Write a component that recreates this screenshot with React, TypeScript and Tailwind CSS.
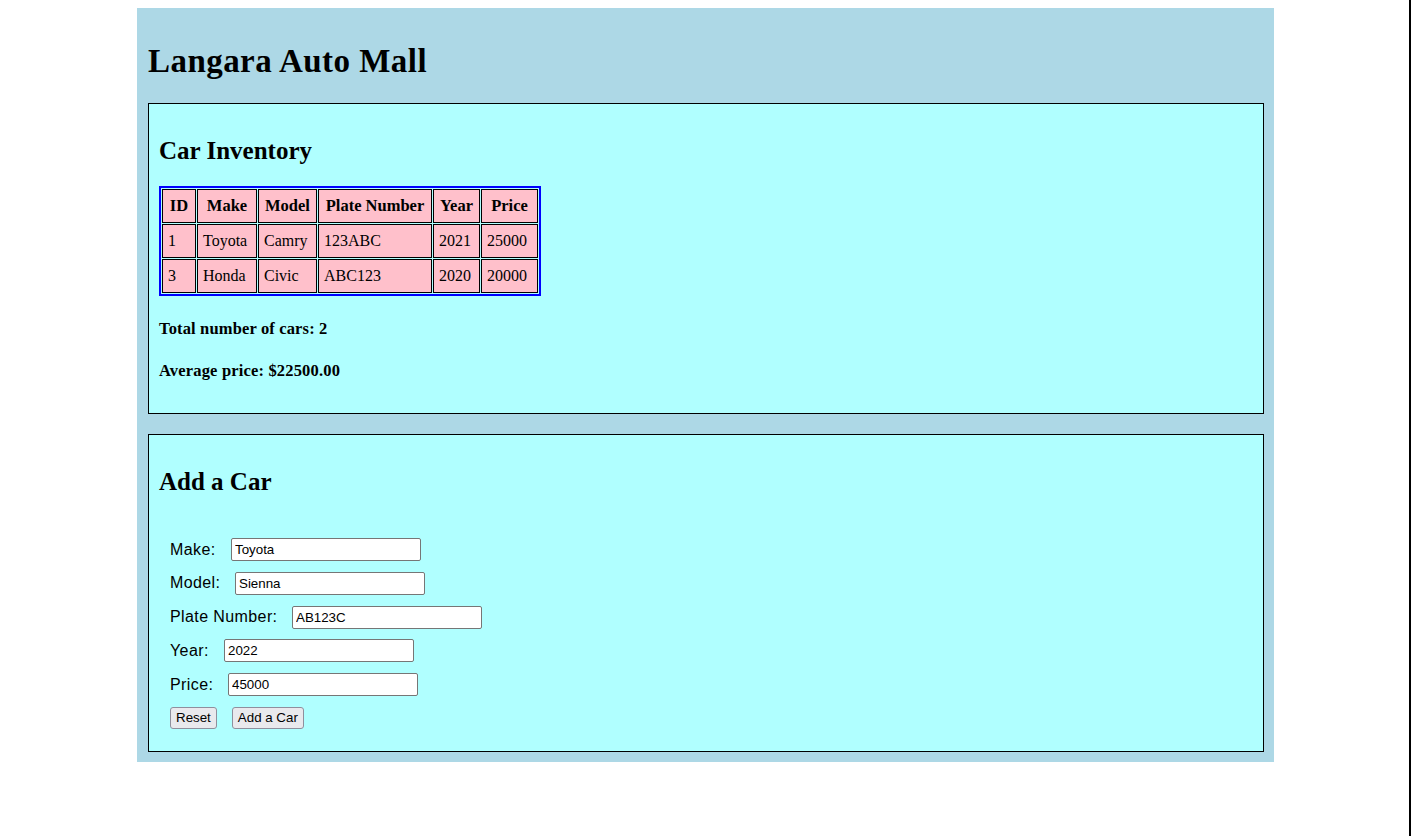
import { useState } from 'react';

interface Car {
  id: number;
  make: string;
  model: string;
  plate: string;
  year: number;
  price: number;
}

const initialCars: Car[] = [
  { id: 1, make: 'Toyota', model: 'Camry', plate: '123ABC', year: 2021, price: 25000 },
  { id: 3, make: 'Honda', model: 'Civic', plate: 'ABC123', year: 2020, price: 20000 },
];

const serif = "font-['Liberation_Serif','Times_New_Roman',serif]";
const sans = "font-['Liberation_Sans',Arial,sans-serif]";

const cell = 'border border-black bg-[#ffc0cb] px-[5px] py-0 h-[34px] leading-[18px]';
const btn = 'h-[22px] px-[5px] border border-[#8f8f9d] rounded-[3px] bg-[#e9e9ed] text-[13.33px] leading-[16px] text-black';

export default function App() {
  const [cars] = useState<Car[]>(initialCars);
  const [form, setForm] = useState({
    make: 'Toyota',
    model: 'Sienna',
    plate: 'AB123C',
    year: '2022',
    price: '45000',
  });

  const total = cars.length;
  const average = total ? cars.reduce((sum, c) => sum + c.price, 0) / total : 0;

  // label widths include the space before the input
  const fields: { key: keyof typeof form; label: string; width: string }[] = [
    { key: 'make', label: 'Make:', width: 'w-[61px]' },
    { key: 'model', label: 'Model:', width: 'w-[65px]' },
    { key: 'plate', label: 'Plate Number:', width: 'w-[122px]' },
    { key: 'year', label: 'Year:', width: 'w-[54px]' },
    { key: 'price', label: 'Price:', width: 'w-[58px]' },
  ];

  return (
    <div className="w-full bg-white">
      <div className="w-[1411px] h-[836px] border-r-2 border-black pt-[8px]">
        <div className={`ml-[137px] w-[1137px] bg-[#add8e6] pl-[11px] pr-[10px] pt-[10px] pb-[10px] text-black ${serif}`}>
          <h1 className="mt-[23.8px] mb-[23.2px] text-[33px] leading-[38px] font-bold tracking-[0.45px]">
            Langara Auto Mall
          </h1>

          {/* Inventory */}
          <section className="border border-black bg-[#b0ffff] p-[10px]">
            <h2 className="mt-[22px] mb-[21px] text-[25px] leading-[29px] font-bold">Car Inventory</h2>
            <table className="table-fixed w-[382px] border-separate border-spacing-[1px] border-2 border-[#0000ff] text-[16px]">
              <thead>
                <tr className="text-[16.5px] font-bold">
                  <th className={`${cell} w-[34px] text-center`}>ID</th>
                  <th className={`${cell} w-[60px] text-center`}>Make</th>
                  <th className={`${cell} w-[59px] text-center`}>Model</th>
                  <th className={`${cell} w-[114px] text-center`}>Plate Number</th>
                  <th className={`${cell} w-[47px] text-center`}>Year</th>
                  <th className={`${cell} w-[57px] text-center`}>Price</th>
                </tr>
              </thead>
              <tbody>
                {cars.map(car => (
                  <tr key={car.id}>
                    <td className={cell}>{car.id}</td>
                    <td className={cell}>{car.make}</td>
                    <td className={cell}>{car.model}</td>
                    <td className={cell}>{car.plate}</td>
                    <td className={cell}>{car.year}</td>
                    <td className={cell}>{car.price}</td>
                  </tr>
                ))}
              </tbody>
            </table>
            <p className="mt-[23.6px] text-[16.5px] leading-[18px] font-bold tracking-[0.15px]">
              Total number of cars: {total}
            </p>
            <p className="mt-[24px] mb-[23.4px] text-[16.5px] leading-[18px] font-bold tracking-[0.17px]">
              Average price: ${average.toFixed(2)}
            </p>
          </section>

          {/* Add form */}
          <section className="mt-[20px] border border-black bg-[#b0ffff] p-[10px]">
            <h2 className="mt-[22px] mb-[21px] text-[25px] leading-[29px] font-bold">Add a Car</h2>
            <form
              className={`flex flex-col gap-[10.7px] pl-[11px] pt-[21.3px] pb-[11px] ${sans}`}
              onSubmit={e => e.preventDefault()}
            >
              {fields.map(f => (
                <div key={f.key} className="flex items-center h-[23px]">
                  <label className={`${f.width} shrink-0 text-[16px] leading-[18px] tracking-[0.4px]`}>{f.label}</label>
                  <input
                    type="text"
                    value={form[f.key]}
                    onChange={e => setForm({ ...form, [f.key]: e.target.value })}
                    className="w-[190px] h-[23px] border border-[#767676] rounded-[2px] bg-white px-[3px] text-[13.33px] leading-[16px] text-black outline-none"
                  />
                </div>
              ))}
              <div className="flex items-center h-[23px] gap-[15px]">
                <button type="reset" className={btn}>
                  Reset
                </button>
                <button type="submit" className={btn}>
                  Add a Car
                </button>
              </div>
            </form>
          </section>
        </div>
      </div>
    </div>
  );
}
